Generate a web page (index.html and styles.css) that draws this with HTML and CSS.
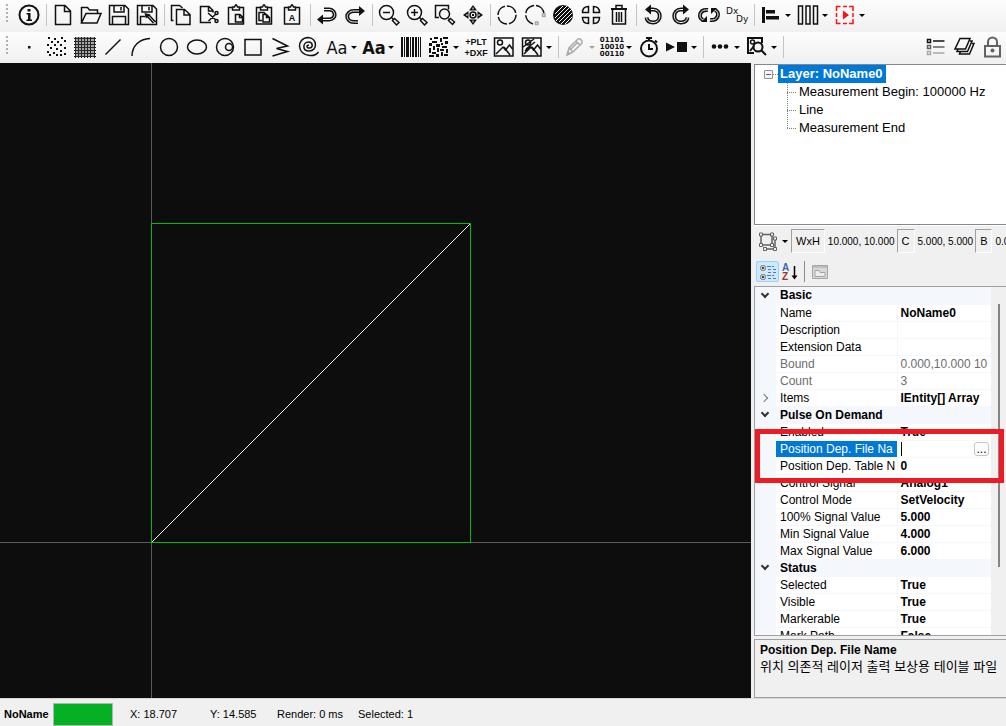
FILE: index.html
```html
<!DOCTYPE html>
<html lang="en">
<head>
<meta charset="utf-8">
<title>Layer editor</title>
<link rel="stylesheet" href="styles.css">
</head>
<body>
<div class="app">
<header>
  <div class="toolbar toolbar-file">
    <span class="grip"></span>
    <button class="tool" aria-label="About"><svg class="icon" viewBox="0 0 22 22"><circle class="bold" cx="11" cy="11" r="9.500"/><path class="fill" d="M9.500 5h3v2.500h-3zM8.500 9h4v6.500h1.500v1.500h-5.500v-1.500h1.500v-5h-1.500z"/></svg></button>
    <span class="sep"></span>
    <button class="tool" aria-label="New"><svg class="icon" viewBox="0 0 22 22"><path d="M3.500 1.500h9.500l5.500 5.500v13.500h-15zM12.500 1.500v6h6"/></svg></button>
    <button class="tool" aria-label="Open"><svg class="icon" viewBox="0 0 22 22"><path d="M1.500 19V3.500h6l2 2.500h8v3.500M1.500 19l4.500-9.500h15l-4 9.500z"/></svg></button>
    <button class="tool" aria-label="Save"><svg class="icon" viewBox="0 0 22 22"><path d="M1.500 1.500h15.500l3.500 3.500v15.500h-19zM6 1.500v6.500h10v-6.500M4.500 20v-7.500h13v7.500M13 3v3.500"/></svg></button>
    <button class="tool" aria-label="Save as"><svg class="icon" viewBox="0 0 22 22"><path d="M1.500 1.500h15.500l3.500 3.500v15.500h-19zM6 1.500v6.500h10v-6.500M4.500 20v-7.500h5M13 3v3.500M11 12l6.500 7M13 11l6.500 7"/><path class="fill" d="M8.500 9l6 1.500-4.500 4z"/></svg></button>
    <span class="sep"></span>
    <button class="tool" aria-label="Copy"><svg class="icon" viewBox="0 0 22 22"><path d="M6.500 5.500h8l5.500 5v10h-13.500zM14 5.500v5.500h6M3.500 16.500h-2v-15h8l3 2.500"/></svg></button>
    <button class="tool" aria-label="Cut"><svg class="icon" viewBox="0 0 22 22"><path d="M13 18.500h-10.500v-16h8.500l4 4v2M10.500 2.500v4.500h5M10 9l8 7M10.500 17l7.500-7"/><circle cx="18.500" cy="9" r="1.500"/><circle cx="18.500" cy="17" r="1.500"/></svg></button>
    <button class="tool" aria-label="Paste"><svg class="icon" viewBox="0 0 22 22"><path d="M7 3.500h-4.500v16.500h15v-16.500h-4.500M6.500 6h7v-3h-2l-1-2h-1l-1 2h-2zM9.500 10.500h4.500l2.500 2.500v5h-7zM13.500 10.500v3h3"/></svg></button>
    <button class="tool" aria-label="Paste array"><svg class="icon" viewBox="0 0 22 22"><path d="M7 3.500h-4.500v16.500h15v-16.500h-4.500M6.500 6h7v-3h-2l-1-2h-1l-1 2h-2zM9 10.500h3.500l3 3v4.500h-6.500zM12.500 10.500v3h3M8 16.500h-3v-8h5l2 2"/></svg></button>
    <button class="tool" aria-label="Paste text"><svg class="icon" viewBox="0 0 22 22"><path d="M7 3.500h-4.500v16.500h15v-16.500h-4.500M6.500 6h7v-3h-2l-1-2h-1l-1 2h-2z"/><text class="glyph" x="10" y="17" text-anchor="middle">A</text></svg></button>
    <span class="sep"></span>
    <button class="tool" aria-label="Undo"><svg class="icon" viewBox="0 0 22 22"><path class="double" d="M8 5.500h5c7 0 8 10 0 10h-6"/><path class="double-core" d="M7 5.500h6c7 0 8 10 0 10h-7"/><path class="fill" d="M1 15.500l6-5v10z"/></svg></button>
    <button class="tool" aria-label="Redo"><svg class="icon" viewBox="0 0 22 22"><path class="double" d="M14 18h-4c-9 0-9-11 0-11h5"/><path class="double-core" d="M15 18h-5c-9 0-9-11 0-11h6"/><path class="fill" d="M21 7l-6-5v10z"/></svg></button>
    <span class="sep"></span>
    <button class="tool" aria-label="Zoom out"><svg class="icon" viewBox="0 0 22 22"><circle cx="8.500" cy="8.500" r="7"/><path d="M5 8.500h7M13 13l2 2M14.500 16.500l2-2 4.500 4-2.500 2.500z"/></svg></button>
    <button class="tool" aria-label="Zoom in"><svg class="icon" viewBox="0 0 22 22"><circle cx="8.500" cy="8.500" r="7"/><path d="M5 8.500h7M8.500 5v7M13 13l2 2M14.500 16.500l2-2 4.500 4-2.500 2.500z"/></svg></button>
    <button class="tool" aria-label="Zoom to fit"><svg class="icon" viewBox="0 0 22 22"><path d="M5 13.500h-3.500v-12h13v4M14.500 14.500l1.500 1.500M14.500 16.500l2-2 4 3.500-2 2.500z"/><circle cx="10.500" cy="10" r="5"/></svg></button>
    <button class="tool" aria-label="Pan"><svg class="icon" viewBox="0 0 22 22"><circle cx="11" cy="11" r="3"/><path class="fill" d="M10 10h2v2h-2zM11 1l4 5.500h-8zM11 21l4-5.500h-8zM1 11l5.500-4v8zM21 11l-5.500-4v8z"/><path class="light" d="M11 3.500v2M11 16.500v2M4 11h2M16 11h2"/></svg></button>
    <span class="sep"></span>
    <button class="tool" aria-label="Circle path"><svg class="icon" viewBox="0 0 22 22"><circle cx="11" cy="11" r="9" stroke-dasharray="12 2"/></svg></button>
    <button class="tool" aria-label="Arc path"><svg class="icon" viewBox="0 0 22 22"><path d="M9 20c-9-3-10-15-1-18 6-2 11 2 12 7" stroke-dasharray="12 2"/><path class="muted" d="M11.500 18h2.500v2.500h-2.500zM18.500 10h2.500v2.500h-2.500z"/></svg></button>
    <button class="tool" aria-label="Hatch"><svg class="icon" viewBox="0 0 22 22"><circle class="fill" cx="11" cy="11" r="10"/><path class="light" d="M3 10l8-8M3 14l12-12M4 17l14-14M7 18l13-13M9 20l11-11M13 20l7-7"/></svg></button>
    <button class="tool" aria-label="Divide"><svg class="icon" viewBox="0 0 22 22"><path d="M8.500 2.500v6h-6c0-4 2.500-6 6-6zM13.500 2.500v6h6c0-4-2.500-6-6-6zM8.500 19.500v-6h-6c0 4 2.500 6 6 6zM13.500 19.500v-6h6c0 4-2.500 6-6 6z"/></svg></button>
    <button class="tool" aria-label="Delete"><svg class="icon" viewBox="0 0 22 22"><path d="M8 4v-2.500h6v2.500M4.500 5v15h13v-15M8.500 8v10M11 8v10M13.500 8v10"/><path class="bold" d="M3 5h16"/></svg></button>
    <span class="sep"></span>
    <button class="tool" aria-label="Rotate left"><svg class="icon" viewBox="0 0 22 22"><path class="double" d="M7 5.500h4c9 0 9 13 0 13-4 0-6-2-6.500-5"/><path class="double-core" d="M7 5.500h4c9 0 9 13 0 13-4 0-6-2-6.500-5"/><path class="fill" d="M3 5.500l6-5v10z"/></svg></button>
    <button class="tool" aria-label="Rotate right"><svg class="icon" viewBox="0 0 22 22"><path class="double" d="M15 5.500h-4c-9 0-9 13 0 13 4 0 6-2 6.500-5"/><path class="double-core" d="M15 5.500h-4c-9 0-9 13 0 13 4 0 6-2 6.500-5"/><path class="fill" d="M19 5.500l-6-5v10z"/></svg></button>
    <button class="tool" aria-label="Rotate"><svg class="icon" viewBox="0 0 22 22"><path class="double" d="M10 6c-9-1-10 8-5 10M12 16c9 1 10-8 5-10"/><path class="double-core" d="M10 6c-9-1-10 8-5 10M12 16c9 1 10-8 5-10"/><path class="fill" d="M3 18h6v-6zM19 4h-6v6z"/></svg></button>
    <button class="tool" aria-label="Offset"><svg class="icon" viewBox="0 0 22 22"><text class="delta" x="0" y="10">Dx</text><text class="delta" x="10" y="18">Dy</text></svg></button>
    <span class="sep"></span>
    <button class="tool" aria-label="Align"><svg class="icon" viewBox="0 0 22 22"><path class="fill" d="M2 3h3v16h-3zM6 6h9v3.500h-9zM6 12h13v3.500h-13z"/></svg></button><button class="drop" aria-label="Align options"></button>
    <button class="tool" aria-label="Distribute"><svg class="icon" viewBox="0 0 22 22"><path d="M1.500 2h4v18h-4zM9 2h4v18h-4zM16.500 2h4v18h-4z"/></svg></button><button class="drop" aria-label="Distribute options"></button>
    <button class="tool" aria-label="Simulate"><svg class="icon icon-red" viewBox="0 0 22 22"><path d="M2.500 7v-4.500h4M9 2.500h4M15 2.500h4v4.500M19 9v4M19 15v4.500h-4M13 19.500h-4M6.500 19.500h-4v-4.500M2.500 13v-4"/><path class="fill" d="M9 6.500l6 4.500-6 4.500z"/></svg></button><button class="drop" aria-label="Simulate options"></button>
  </div>
  <div class="toolbar toolbar-draw">
    <span class="grip"></span>
    <button class="tool" aria-label="Point"><svg class="icon" viewBox="0 0 22 22"><path class="fill" d="M10 10h2.500v2.500h-2.500z"/></svg></button>
    <button class="tool" aria-label="Points"><svg class="icon" viewBox="0 0 22 22"><path class="fill" d="M2 1h2v2h-2zM8 2h2v2h-2zM15 1h2v2h-2zM5 5h2v2h-2zM11 5h2v2h-2zM18 4h2v2h-2zM1 8h2v2h-2zM8 8h2v2h-2zM14 8h2v2h-2zM4 11h2v2h-2zM10 12h2v2h-2zM18 11h2v2h-2zM1 15h2v2h-2zM7 16h2v2h-2zM14 14h2v2h-2zM3 18h2v2h-2zM10 18h2v2h-2zM18 17h2v2h-2zM14 18h2v2h-2z"/></svg></button>
    <button class="tool" aria-label="Raster"><svg class="icon" viewBox="0 0 22 22"><path class="fine" d="M0 2.500h22M0 5.500h22M0 8.500h22M0 11.500h22M0 14.500h22M0 17.500h22M0 20.500h22M1.500 1v21M4.500 1v21M7.500 1v21M10.500 1v21M13.500 1v21M16.500 1v21M20.500 1v21"/><path class="weave" d="M1 1h20v20h-20z"/></svg></button>
    <button class="tool" aria-label="Line"><svg class="icon" viewBox="0 0 22 22"><path d="M3.500 18.500l15-15"/></svg></button>
    <button class="tool" aria-label="Arc"><svg class="icon" viewBox="0 0 22 22"><path d="M2 20c0-10 7-17 18-17.500"/></svg></button>
    <button class="tool" aria-label="Circle"><svg class="icon" viewBox="0 0 22 22"><circle cx="11" cy="11" r="8.500"/></svg></button>
    <button class="tool" aria-label="Ellipse"><svg class="icon" viewBox="0 0 22 22"><ellipse cx="11" cy="11" rx="9.500" ry="7"/></svg></button>
    <button class="tool" aria-label="Trepan"><svg class="icon" viewBox="0 0 22 22"><circle cx="11" cy="11" r="8.500"/><circle cx="15" cy="11" r="3.500"/></svg></button>
    <button class="tool" aria-label="Rectangle"><svg class="icon" viewBox="0 0 22 22"><path d="M3 3.500h16v15.500h-16z"/></svg></button>
    <button class="tool" aria-label="Polyline"><svg class="icon" viewBox="0 0 22 22"><path d="M2.500 2.500l15 7.500-11 2.500 11 3-15 4.500"/></svg></button>
    <button class="tool" aria-label="Spiral"><svg class="icon" viewBox="0 0 22 22"><path d="M11 9.500c-2.500-1.500-3 3 .500 2.500 4 0 3.500-6-1-6-6 0-6.500 9 .500 9 9 0 8.500-13-1-13.500-12 .500-11 17.500 1.500 18 4 .500 7-1 9-3.500"/></svg></button>
    <button class="tool" aria-label="Text"><svg class="icon" viewBox="0 0 22 22"><text class="letters" x="11" y="18" text-anchor="middle">Aa</text></svg></button><button class="drop" aria-label="Text options"></button>
    <button class="tool" aria-label="Font text"><svg class="icon" viewBox="0 0 22 22"><text class="letters letters-bold" x="11" y="18" text-anchor="middle">Aa</text></svg></button><button class="drop" aria-label="Font text options"></button>
    <button class="tool" aria-label="Barcode"><svg class="icon" viewBox="0 0 22 22"><path class="fill" d="M1 1h2v20h-2zM4 1h1v20h-1zM6 1h3v20h-3zM10 1h1v20h-1zM12 1h2v20h-2zM15 1h2v20h-2zM18 1h1v20h-1zM20 1h1v20h-1z"/></svg></button>
    <button class="tool" aria-label="2D code"><svg class="icon" viewBox="0 0 22 22"><path class="fill" d="M2 2h2v2h-2zM6 1h4v2h-4zM12 2h2v4h-2zM15 1h5v2h-5zM4 5h5v2h-5zM17 5h3v3h-3zM1 7h3v3h-3zM8 8h4v3h-4zM13 7h2v2h-2zM5 10h2v4h-2zM14 10h5v2h-5zM1 12h2v5h-2zM9 12h2v4h-2zM12 13h4v2h-4zM18 13h2v4h-2zM4 16h4v2h-4zM13 16h2v4h-2zM1 19h5v2h-5zM8 18h3v3h-3zM16 18h4v2h-4z"/></svg></button><button class="drop" aria-label="2D code options"></button>
    <button class="tool" aria-label="Import PLT or DXF"><svg class="icon" viewBox="0 0 22 22"><text class="glyph" x="11" y="9" text-anchor="middle">+PLT</text><text class="glyph" x="11" y="20" text-anchor="middle">+DXF</text></svg></button>
    <button class="tool" aria-label="Image"><svg class="icon" viewBox="0 0 22 22"><path d="M1.500 2h18.500v18h-18.500zM3 18l7-7 2.500 3 4-5 3 4M11 11l6 8"/><circle cx="7" cy="6.500" r="2.500"/></svg></button>
    <button class="tool" aria-label="Image import"><svg class="icon" viewBox="0 0 22 22"><path d="M1.500 2h18.500v18h-18.500zM3 18l7-7 2.500 3 4-5 3 4M11 11l6 8M2 11l11-8M5 13l9-7M4 15l5-5"/><circle cx="7" cy="6.500" r="2.500"/></svg></button><button class="drop" aria-label="Image import options"></button>
    <span class="sep"></span>
    <button class="tool" aria-label="Edit" disabled><svg class="icon" viewBox="0 0 22 22"><path d="M3 19l2-7 9-9c2-1 5 2 4 4l-9 9zM5 12l4 4M12 5l4 4M7 13l7-7"/><path class="fill" d="M3 19l1-4 3 3z"/></svg></button><button class="drop" aria-label="Edit options" disabled></button>
    <button class="tool" aria-label="Binary"><svg class="icon" viewBox="0 0 22 22"><text class="bits" x="11" y="6" text-anchor="middle">01101</text><text class="bits" x="11" y="13" text-anchor="middle">10010</text><text class="bits" x="11" y="20" text-anchor="middle">00110</text></svg></button><button class="drop" aria-label="Binary options"></button>
    <button class="tool" aria-label="Timer"><svg class="icon" viewBox="0 0 22 22"><circle class="bold" cx="11" cy="12.500" r="8"/><path class="bold" d="M8 2h6M11 2v3M11 8v5h4M17 4.500l2 2"/></svg></button>
    <button class="tool" aria-label="Start and stop"><svg class="icon" viewBox="0 0 22 22"><path class="fill" d="M0 6.500l9 4.500-9 4.500zM11 6h10v10h-10z"/></svg></button><button class="drop" aria-label="Start and stop options"></button>
    <span class="sep"></span>
    <button class="tool" aria-label="More"><svg class="icon" viewBox="0 0 22 22"><circle class="fill" cx="5" cy="10.500" r="2.300"/><circle class="fill" cx="11" cy="10.500" r="2.300"/><circle class="fill" cx="17" cy="10.500" r="2.300"/></svg></button><button class="drop" aria-label="More options"></button>
    <button class="tool" aria-label="Inspect"><svg class="icon" viewBox="0 0 22 22"><path class="bold" d="M8 17h-6v-15h14v5M4 15l4-5M15 14l5 5"/><circle cx="6.500" cy="6" r="2"/><circle class="bold" cx="12" cy="11" r="4.500"/></svg></button><button class="drop" aria-label="Inspect options"></button>
    <span class="sep"></span>
    <span class="spacer"></span>
    <button class="tool" aria-label="List"><svg class="icon" viewBox="0 0 22 22"><path d="M2.500 3.500h3v3h-3zM8 5h11.500"/><path class="gray" d="M2.500 9.500h3v3h-3zM8 11h11.500"/><path class="muted" d="M2.500 15.500h3v3h-3zM8 17h11.500"/></svg></button>
    <button class="tool" aria-label="Layers"><svg class="icon" viewBox="0 0 22 22"><path d="M7 2.500h10l-4.500 10.500h-10.500zM17 5h2l-4.500 10.500h-10.500l1-2.500M19 7.500h2l-4.500 10.500h-10l1-2.500"/></svg></button>
    <button class="tool" aria-label="Lock"><svg class="icon" viewBox="0 0 22 22"><path class="gray bold" d="M4 10h15v10.500h-15zM7 10v-4a4.500 4.500 0 0 1 9 0v4"/><circle class="gray-fill" cx="11.500" cy="14.500" r="2"/></svg></button>
  </div>
</header>
<main class="workspace">
  <section class="canvas" aria-label="Drawing">
    <svg class="drawing" shape-rendering="crispEdges">
      <line class="axis" x1="0" y1="479.500" x2="100%" y2="479.500"/>
      <line class="axis" x1="151.500" y1="0" x2="151.500" y2="100%"/>
      <rect class="bounds" x="151.500" y="160.500" width="319" height="319"/>
      <line class="entity" x1="152" y1="479" x2="470" y2="161"/>
    </svg>
  </section>
  <aside class="sidebar">
    <div class="tree">
      <div class="tree-root"><button class="toggle" aria-label="Collapse layer"></button><span class="dots"></span><span class="tree-selected">Layer: NoName0</span></div>
      <ul class="tree-items">
        <li>Measurement Begin: 100000 Hz</li>
        <li>Line</li>
        <li>Measurement End</li>
      </ul>
    </div>
    <div class="transform">
      <button class="tool" aria-label="Transform"><svg class="icon" viewBox="0 0 22 22"><path class="gray" d="M4 4.500h11v10.500h-11zM7 18v-1M7 19h11v-11h-2"/><path class="node" d="M2.500 3h3v3h-3zM13.500 3h3v3h-3zM2.500 13.500h3v3h-3zM13.500 13.500h3v3h-3zM16.500 7h3v3h-3zM6.500 17.500h3v3h-3zM16.500 17.500h3v3h-3z"/></svg></button><button class="drop" aria-label="Transform options"></button>
      <button class="field">WxH</button><span class="numbers">10.000, 10.000</span>
      <button class="field">C</button><span class="numbers">5.000, 5.000</span>
      <button class="field">B</button><span class="numbers">0.0</span>
    </div>
    <div class="grid-tools">
      <button class="grid-tool active" aria-label="Categorized"><svg class="small" viewBox="0 0 18 18"><rect class="box" x="1.500" y="2.500" width="5" height="5" rx="2"/><rect class="box" x="1.500" y="11.500" width="5" height="5" rx="2"/><path class="ink" d="M2.500 5h3M4 3.500v3M2.500 14h3M4 12.500v3"/><path class="blue" d="M8 3.500h4M9 6.500h3M9 9.500h3M8 12.500h4M9 15.500h3M13 3.500h2M14 6.500h3M14 9.500h3M13 12.500h2M14 15.500h3"/></svg></button>
      <button class="grid-tool" aria-label="Alphabetical"><svg class="small" viewBox="0 0 18 18"><text class="sort-a" x="0" y="8">A</text><text class="sort-z" x="0" y="17">Z</text><path class="arrow" d="M12.500 3v11"/><path d="M9.500 12.500h6l-3 4z"/></svg></button>
      <span class="grid-sep"></span>
      <button class="grid-tool" aria-label="Property pages" disabled><svg class="small" viewBox="0 0 18 18"><path class="page" d="M1.500 2.500h15v13h-15z"/><path class="page-line" d="M1.500 4h15M4 7.500h4l1 2h5v4h-10z"/></svg></button>
    </div>
    <div class="props">
      <table class="prop-table">
        <colgroup><col class="col-gutter"><col class="col-name"><col></colgroup>
        <tbody>
          <tr class="category"><td><span class="chevron"></span></td><th colspan="2">Basic</th></tr>
          <tr><td></td><th>Name</th><td>NoName0</td></tr>
          <tr><td></td><th>Description</th><td></td></tr>
          <tr><td></td><th>Extension Data</th><td></td></tr>
          <tr class="readonly"><td></td><th>Bound</th><td>0.000,10.000 10</td></tr>
          <tr class="readonly"><td></td><th>Count</th><td>3</td></tr>
          <tr><td><span class="chevron closed"></span></td><th>Items</th><td>IEntity[] Array</td></tr>
          <tr class="category"><td><span class="chevron"></span></td><th colspan="2">Pulse On Demand</th></tr>
          <tr><td></td><th>Enabled</th><td>True</td></tr>
          <tr class="selected"><td></td><th><label for="file-name">Position Dep. File Na</label></th><td><div class="editor"><span class="caret"></span><input id="file-name" type="text"><button aria-label="Browse">...</button></div></td></tr>
          <tr><td></td><th>Position Dep. Table N</th><td>0</td></tr>
          <tr><td></td><th>Control Signal</th><td>Analog1</td></tr>
          <tr><td></td><th>Control Mode</th><td>SetVelocity</td></tr>
          <tr><td></td><th>100% Signal Value</th><td>5.000</td></tr>
          <tr><td></td><th>Min Signal Value</th><td>4.000</td></tr>
          <tr><td></td><th>Max Signal Value</th><td>6.000</td></tr>
          <tr class="category"><td><span class="chevron"></span></td><th colspan="2">Status</th></tr>
          <tr><td></td><th>Selected</th><td>True</td></tr>
          <tr><td></td><th>Visible</th><td>True</td></tr>
          <tr><td></td><th>Markerable</th><td>True</td></tr>
          <tr><td></td><th>Mark Path</th><td>False</td></tr>
        </tbody>
      </table>
      <div class="scrollbar"><span class="thumb"></span></div>
      <div class="callout"></div>
    </div>
    <div class="help">
      <strong>Position Dep. File Name</strong>
      <p lang="ko">위치 의존적 레이저 출력 보상용 테이블 파일</p>
    </div>
  </aside>
</main>
<footer class="status">
  <strong class="status-name">NoName</strong>
  <span class="status-light"></span>
  <span class="status-x">X: 18.707</span>
  <span class="status-y">Y: 14.585</span>
  <span class="status-render">Render: 0 ms</span>
  <span>Selected: 1</span>
</footer>
</div>
</body>
</html>
```

FILE: styles.css
```css
* { box-sizing: border-box; }

body {
  margin: 0;
  background: #f0f0f0;
  color: #000;
  font: 12px/17px "Liberation Sans", "Noto Sans CJK KR", sans-serif;
}

button {
  margin: 0;
  padding: 0;
  border: 0;
  background: none;
  color: inherit;
  font: inherit;
}

.app {
  display: flex;
  flex-direction: column;
  height: 100vh;
}

/* Toolbars */
.toolbar {
  display: flex;
  align-items: flex-start;
  height: 32px;
  background: linear-gradient(#fdfdfd, #f0f0f0);
}
.toolbar-draw { height: 31px; }
.grip {
  flex: none;
  width: 2px;
  height: 20px;
  margin: 4px 7px 0 6px;
  background: repeating-linear-gradient(#b0b0b0 0 2px, transparent 2px 4px);
}
.tool {
  display: flex;
  flex: none;
  align-items: center;
  justify-content: center;
  width: 28px;
  height: 30px;
}
.sep {
  flex: none;
  width: 6px;
  height: 22px;
  margin-top: 4px;
  background: linear-gradient(#c4c4c4, #c4c4c4) 3px 0 / 1px 100% no-repeat;
}
.drop {
  display: flex;
  flex: none;
  align-items: center;
  justify-content: flex-start;
  width: 9px;
  height: 30px;
}
.drop::before {
  content: "";
  border: 3px solid transparent;
  border-top-color: #000;
  border-bottom: 0;
}
.drop:disabled::before { border-top-color: #a0a0a0; }
.spacer { flex: 1; }

/* Icons */
.icon {
  display: block;
  width: 22px;
  height: 22px;
  overflow: visible;
  fill: none;
  stroke: #111;
  stroke-width: 1.5;
}
.icon .fill { fill: #111; stroke: none; }
.icon .bold { stroke-width: 2; }
.icon .fine { stroke-width: 1; }
.icon .weave { fill: #444; fill-opacity: 0.45; stroke: none; }
.icon .light { stroke: #f6f6f6; stroke-width: 1; }
.icon .muted { stroke: #a8a8a8; }
.icon .gray { stroke: #626262; }
.icon .gray-fill { fill: #626262; stroke: none; }
.icon .node { fill: #f0f0f0; stroke: #626262; stroke-width: 1; }
.icon .double { stroke-width: 4; }
.icon .double-core { stroke: #f6f6f6; stroke-width: 1; }
.icon text { fill: #111; stroke: none; }
.icon-red { stroke: #f11; }
.icon-red .fill { fill: #f11; }
.tool:disabled .icon { stroke: #aaa; }
.tool:disabled .fill { fill: #aaa; }
.glyph { font: bold 9px "Liberation Sans", sans-serif; }
.delta { font: 9px "DejaVu Sans", sans-serif; }
.letters { font: 18px "DejaVu Sans Condensed", "Liberation Sans", sans-serif; }
.letters-bold { font-weight: bold; }
.bits { font: bold 7px "DejaVu Sans", sans-serif; }

/* Drawing area */
.workspace {
  display: flex;
  flex: 1;
  min-height: 0;
}
.canvas {
  flex: 1;
  min-width: 0;
  background: #0d0d0d;
}
.drawing { display: block; width: 100%; height: 100%; }
.axis { stroke: #5a5a5a; }
.bounds { fill: none; stroke: #00bc12; }
.entity { stroke: #fff; }

.sidebar {
  display: flex;
  flex: none;
  flex-direction: column;
  width: 255px;
  padding: 1px 0 0 3px;
  overflow: hidden;
}

/* Layer tree */
.tree {
  flex: none;
  height: 161px;
  padding: 0 0 0 9px;
  border: 1px solid #828790;
  border-right: 0;
  background: #fff;
  font-size: 13px;
  line-height: 18px;
  white-space: nowrap;
}
.tree-root { display: flex; align-items: center; }
.toggle {
  width: 9px;
  height: 9px;
  border: 1px solid #919191;
  border-radius: 1px;
  background: linear-gradient(#4b63a7, #4b63a7) center / 5px 1px no-repeat #f4f4f4;
}
.dots { width: 5px; border-top: 1px dotted #808080; }
.tree-selected {
  padding: 0 3px 0 2px;
  background: #0078d7;
  color: #fff;
  font-weight: bold;
}
.tree-items {
  margin: 0 0 0 23px;
  padding: 0;
  list-style: none;
}
.tree-items li {
  display: flex;
  align-items: center;
}
.tree-items li::before {
  content: "";
  align-self: stretch;
  width: 9px;
  margin-right: 3px;
  background:
    repeating-linear-gradient(#808080 0 1px, transparent 1px 2px) 0 0 / 1px 100% no-repeat,
    repeating-linear-gradient(90deg, #808080 0 1px, transparent 1px 2px) 0 9px / 100% 1px no-repeat;
}
.tree-items li:last-child::before { height: 10px; align-self: flex-start; }

/* Transform bar */
.transform {
  display: flex;
  flex: none;
  align-items: center;
  height: 31px;
  border-top: 1px solid #fff;
  font-size: 11px;
  white-space: nowrap;
}
.field {
  flex: none;
  height: 24px;
  padding: 0 4px;
  border: 1px solid;
  border-color: #a0a0a0 #fff #fff #a0a0a0;
}
.numbers {
  flex: none;
  padding: 0 2px 0 3px;
  font-size: 10px;
}

/* Property grid */
.grid-tools {
  display: flex;
  flex: none;
  align-items: flex-start;
  height: 30px;
  padding: 5px 2px 0;
}
.grid-tool {
  display: flex;
  align-items: center;
  justify-content: center;
  width: 23px;
  height: 21px;
}
.grid-tool.active {
  border: 1px solid #99d1ff;
  border-radius: 2px;
  background: #cce8ff;
}
.grid-sep { width: 1px; height: 21px; margin: 0 3px 0 2px; background: #8c8c8c; }
.small { display: block; width: 18px; height: 18px; overflow: visible; }
.small .box { fill: #fff; stroke: #777; }
.small .ink { stroke: #111; }
.small .blue { stroke: #5c7899; }
.small .arrow { stroke: #000; stroke-width: 1.5; }
.small .page { fill: #d8d8d8; stroke: #a5a5a5; }
.small .page-line { fill: #eee; stroke: #a5a5a5; }
.sort-a { fill: #3969b0; font: bold 10px "Liberation Sans", sans-serif; }
.sort-z { fill: #9c3434; font: bold 10px "Liberation Sans", sans-serif; }

.props {
  position: relative;
  display: flex;
  flex: 1;
  align-items: flex-start;
  min-height: 0;
  overflow: hidden;
  border: 1px solid #a0a0a0;
  border-right: 0;
}
.prop-table {
  flex: 1;
  table-layout: fixed;
  width: 100%;
  border-collapse: collapse;
  background: #fff;
}
.col-gutter { width: 21px; }
.col-name { width: 121px; }
.prop-table tr { height: 17px; }
.prop-table th,
.prop-table td {
  height: 17px;
  padding: 0 0 0 4px;
  border-bottom: 1px solid #f4f7fc;
  overflow: hidden;
  font-weight: normal;
  line-height: 16px;
  text-align: left;
  white-space: nowrap;
}
.prop-table td:last-child {
  padding-left: 3px;
  border-left: 1px solid #f4f7fc;
  font-weight: bold;
}
.prop-table td:first-child {
  padding: 0 6px;
  background: #f4f7fc;
}
.prop-table .category th { background: #f4f7fc; font-weight: bold; }
.prop-table .readonly th { color: #6d6d6d; }
.prop-table .readonly td:last-child { color: #6d6d6d; font-weight: normal; }
.prop-table .selected th { background: #0078d7; color: #fff; }
.chevron {
  display: block;
  width: 6px;
  height: 6px;
  margin: 0 0 3px 1px;
  border: solid #333;
  border-width: 0 2px 2px 0;
  transform: rotate(45deg);
}
.chevron.closed { margin: 0; border-width: 0 1px 1px 0; border-color: #777; transform: rotate(-45deg); }

.editor { display: flex; align-items: center; height: 16px; }
.caret { flex: none; width: 1px; height: 14px; background: #000; }
.editor input {
  flex: 1;
  min-width: 0;
  height: 14px;
  padding: 0;
  border: 0;
  outline: 0;
  background: none;
  font: inherit;
}
.editor button {
  flex: none;
  width: 15px;
  height: 14px;
  margin-right: 2px;
  border: 1px solid #c4c4c4;
  border-radius: 3px;
  background: #fdfdfd;
  font-weight: normal;
  line-height: 10px;
}

.scrollbar {
  display: flex;
  flex: none;
  justify-content: center;
  align-self: stretch;
  width: 15px;
  padding-top: 17px;
}
.thumb { width: 2px; height: 80%; max-height: 263px; background: #858585; }

.callout {
  position: absolute;
  top: 142px;
  right: 2px;
  left: 0;
  height: 54px;
  border: 5px solid #ed1c24;
  pointer-events: none;
}

.help {
  flex: none;
  height: 59px;
  margin-top: 3px;
  padding: 2px 5px;
  overflow: hidden;
  border: 1px solid #a0a0a0;
  border-right: 0;
  line-height: 16px;
  white-space: nowrap;
}
.help strong { display: block; }
.help p { margin: 0; font-family: "Noto Sans CJK KR", sans-serif; font-size: 13px; }

/* Status bar */
.status {
  display: flex;
  flex: none;
  align-items: center;
  height: 28px;
  padding: 4px 0 0 4px;
  border-top: 1px solid #d7d7d7;
  font-size: 11px;
  white-space: nowrap;
}
.status-name { width: 49px; }
.status-light {
  align-self: stretch;
  width: 60px;
  margin-right: 17px;
  border: 1px solid #b4b4b4;
  background: #06b025;
}
.status-x { width: 80px; }
.status-y { width: 67px; }
.status-render { width: 81px; }
```
